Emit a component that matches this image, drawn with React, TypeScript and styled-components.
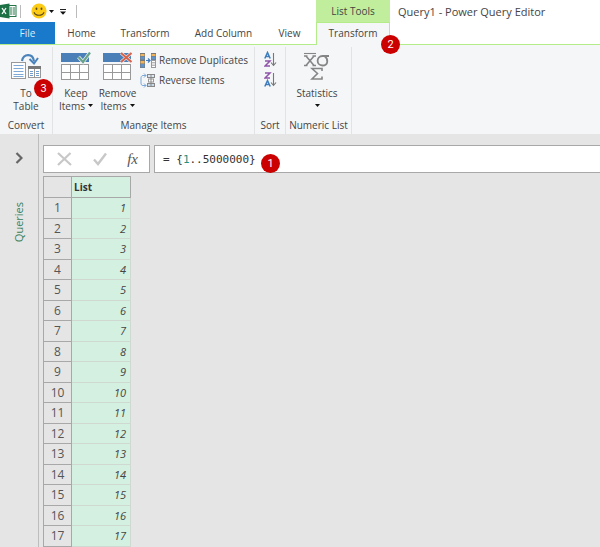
import React from "react";
import styled, { createGlobalStyle } from "styled-components";

const GlobalStyle = createGlobalStyle`
  * { box-sizing: border-box; }
  body { margin: 0; background: #e5e5e5; }
  body, button, input { font-family: "Open Sans", "Noto Sans", sans-serif; color: #444; }
  button { border: 0; padding: 0; margin: 0; background: transparent; cursor: pointer; }
  svg { display: block; flex: none; }
`;

const Window = styled.div`
  display: flex;
  flex-direction: column;
  min-height: 100vh;
`;

const Header = styled.header`
  display: flex;
  align-items: flex-end;
  height: 45px;
  background: linear-gradient(#fff 44px, #b4ec8a 44px);
`;

const HeaderLeft = styled.div`
  display: flex;
  flex-direction: column;
  width: 316px;
  height: 45px;
`;

const QuickBar = styled.div`
  display: flex;
  align-items: center;
  height: 22px;
`;

const QuickButton = styled.button`
  display: flex;
  align-items: center;
  gap: 2px;
  margin-right: 6px;
`;

const Divider = styled.span<{ $left: number; $right: number }>`
  width: 1px;
  height: 13px;
  margin: 0 ${(p) => p.$right}px 0 ${(p) => p.$left}px;
  background: #bbb;
`;

const Tabs = styled.nav`
  display: flex;
  height: 22px;
`;

const Tab = styled.button<{ $width: number; $file?: boolean }>`
  width: ${(p) => p.$width}px;
  height: 22px;
  font-size: 10px;
  line-height: 22px;
  white-space: nowrap;
  color: ${(p) => (p.$file ? "#dcecf8" : "#444")};
  background: ${(p) => (p.$file ? "#1979ca" : "transparent")};
`;

const ContextTabs = styled.div`
  position: relative;
  display: flex;
  flex-direction: column;
  width: 74px;
  height: 45px;
`;

const ContextTitle = styled.div`
  height: 22px;
  background: #c0ee9c;
  font-size: 10px;
  line-height: 22px;
  text-align: center;
`;

const ContextTab = styled.button`
  height: 23px;
  padding-bottom: 2px;
  border: 1px solid #b4ec8a;
  border-bottom: 0;
  background: #f4f6f8;
  font-size: 10px;
  line-height: 20px;
`;

const Title = styled.h1`
  align-self: flex-start;
  margin: 0 0 0 8px;
  font-size: 11px;
  font-weight: 400;
  line-height: 24px;
  white-space: nowrap;
`;

const Badge = styled.span<{ $left: number; $top: number }>`
  position: absolute;
  left: ${(p) => p.$left}px;
  top: ${(p) => p.$top}px;
  z-index: 1;
  width: 19px;
  height: 19px;
  border-radius: 50%;
  background: #cb0000;
  color: #fff;
  font: 11px/19px Roboto, sans-serif;
  text-align: center;
`;

const Ribbon = styled.section`
  display: flex;
  height: 89px;
  padding-top: 2px;
  background: #f4f6f8;
`;

const Group = styled.div<{ $width: number }>`
  position: relative;
  display: flex;
  flex-direction: column;
  width: ${(p) => p.$width}px;
  height: 87px;
  border-right: 1px solid #e1e3e5;
`;

const GroupBody = styled.div<{ $start?: boolean }>`
  display: flex;
  flex: 1;
  justify-content: ${(p) => (p.$start ? "flex-start" : "center")};
`;

const GroupLabel = styled.div`
  height: 18px;
  font-size: 10px;
  line-height: 18px;
  text-align: center;
  white-space: nowrap;
`;

const BigButton = styled.button<{ $width: number }>`
  display: flex;
  flex-direction: column;
  align-items: center;
  width: ${(p) => p.$width}px;
  padding-top: 5px;
  font-size: 10px;
  line-height: 14px;

  > svg { margin-bottom: 6px; }
`;

const ButtonLine = styled.span`
  display: flex;
  align-items: center;
  gap: 3px;
  height: 13px;
  white-space: nowrap;
`;

const SmallButtons = styled.div`
  display: flex;
  flex-direction: column;
  gap: 4px;
  padding: 5px 0 0 4px;
  flex: 1;
`;

const SmallButton = styled.button`
  display: flex;
  align-items: center;
  gap: 3px;
  height: 16px;
  font-size: 10px;
  white-space: nowrap;
`;

const SortButtons = styled.div`
  display: flex;
  flex-direction: column;
  gap: 3px;
  padding-top: 4px;
`;

const Body = styled.main`
  display: flex;
  flex: 1;
`;

const QueriesPane = styled.aside`
  display: flex;
  flex-direction: column;
  align-items: center;
  width: 39px;
  padding-top: 18px;
  border-right: 1px solid #bdbdbd;
`;

const PaneTitle = styled.span`
  margin-top: 38px;
  writing-mode: vertical-rl;
  transform: rotate(180deg);
  color: #388058;
  font-size: 11px;
  line-height: 18px;
`;

const Content = styled.div`
  flex: 1;
  min-width: 0;
  padding: 11px 0 0 4px;
`;

const FormulaRow = styled.div`
  display: flex;
  gap: 4px;
  height: 28px;
`;

const FormulaTools = styled.div`
  display: flex;
  align-items: center;
  justify-content: space-between;
  width: 107px;
  padding: 0 11px 0 13px;
  border: 1px solid #a8a8a8;
  background: #fff;
`;

const FxLabel = styled.span`
  font: italic 15px/20px "Liberation Serif", serif;
  color: #555;
`;

const Formula = styled.div`
  position: relative;
  flex: 1;
  padding-left: 8px;
  border: 1px solid #a8a8a8;
  border-right: 0;
  background: #fff;
  font: 11px/28px "DejaVu Sans Mono", monospace;
  color: #333;
  white-space: pre;
`;

const FormulaNumber = styled.span`
  color: #259180;
`;

const ListTable = styled.table`
  width: 88px;
  margin-top: 3px;
  table-layout: fixed;
  border-collapse: collapse;
`;

const CornerCell = styled.th`
  width: 28px;
  height: 21px;
  padding: 0;
  border: 1px solid #a8a8a8;
`;

const ColumnHead = styled.th`
  padding: 0 0 0 2px;
  border: 1px solid #a8a8a8;
  background: #d4f0e0;
  font-size: 10px;
  line-height: 14px;
  text-align: left;
  color: #333;
`;

const Row = styled.tr`
  height: 20px;
  &:nth-child(odd) { height: 21px; }
`;

const RowHead = styled.th`
  padding: 0;
  border: 1px solid #a8a8a8;
  font-size: 12px;
  font-weight: 400;
  line-height: 16px;
  color: #555;
`;

const Value = styled.td`
  padding: 0 4px 0 0;
  border: 1px solid #d0d8d2;
  border-left-color: #a8a8a8;
  background: #d4f0e0;
  font-size: 11px;
  font-style: italic;
  line-height: 16px;
  text-align: right;
`;

const Caret = () => (
  <svg width="5" height="3" viewBox="0 0 5 3"><path d="M0 0h5L2.5 3z" fill="#111" /></svg>
);

const ExcelIcon = () => (
  <svg width="17" height="16" viewBox="0 0 17 16">
    <rect x="8" y="2.5" width="8" height="11" fill="#fff" stroke="#247548" />
    <path d="M10 5h5M10 7h5M10 9h5M10 11h5" stroke="#247548" strokeWidth="1.1" />
    <path d="M12.5 4v8" stroke="#fff" strokeWidth=".6" />
    <path d="M0 2 9.500 .5v15L0 14z" fill="#1e7145" />
    <path d="m2 5 4 6M6 5l-4 6" stroke="#fff" strokeWidth="1.3" />
  </svg>
);

const SmileIcon = () => (
  <svg width="16" height="16" viewBox="0 0 16 16">
    <circle cx="8" cy="8" r="7.600" fill="#fbcb16" />
    <ellipse cx="5.500" cy="5.800" rx=".9" ry="1.300" fill="#5b4a1a" />
    <ellipse cx="10.500" cy="5.800" rx=".9" ry="1.300" fill="#5b4a1a" />
    <path d="M3 9.300c1.500 4 8.500 4 10 0" fill="none" stroke="#5b4a1a" strokeWidth="1.100" />
  </svg>
);

const MoreIcon = () => (
  <svg width="6" height="8" viewBox="0 0 6 8"><path d="M0 2.500h6" stroke="#222" /><path d="M0 4.500h6L3 7.800z" fill="#111" /></svg>
);

const ToTableIcon = () => (
  <svg width="31" height="28" viewBox="0 0 31 28">
    <path d="M11 9C12 1.500 22 .5 23 9.500" fill="none" stroke="#4a82bb" strokeWidth="2.200" />
    <path d="m18.500 7 4.500 4.500 4-5.500" fill="none" stroke="#4a82bb" strokeWidth="2" />
    <rect x=".5" y="10.500" width="14" height="16" fill="#fff" stroke="#999" />
    <path d="M2.500 13.500h10M2.500 16.500h10M2.500 19.500h10M2.500 22.500h10M2.500 24.500h10" stroke="#7ea9d4" />
    <rect x="17.500" y="14.500" width="12" height="11" fill="#fff" stroke="#999" />
    <path d="M17 15.500h13" stroke="#777" strokeWidth="3" />
    <path d="M23.500 17v8" stroke="#999" />
    <path d="M19 19.500h3M25 19.500h3M19 21.500h3M25 21.500h3M19 23.500h3M25 23.500h3" stroke="#6d9ccc" />
  </svg>
);

const GridIcon = ({ mark }: { mark: "check" | "cross" }) => (
  <svg width="30" height="28" viewBox="0 0 30 28">
    <path d="M0 1h28v9H0z" fill="#4a7fb8" />
    <rect x=".5" y="12.500" width="27" height="15" fill="#fff" stroke="#999" />
    <path d="M9.500 12v16M18.500 12v16M0 20.500h28" stroke="#999" />
    {mark === "check" ? (
      <>
        <path d="m17.500 5 4.500 5 7-9.500" fill="none" stroke="#f4f6f8" strokeWidth="3.600" />
        <path d="m17.500 5 4.500 5 7-9.500" fill="none" stroke="#68a28a" strokeWidth="2.200" />
      </>
    ) : (
      <>
        <path d="m18 1 10.500 9M28.500 1 18 10" stroke="#e6e7ec" strokeWidth="3.200" />
        <path d="m18 1 10.500 9M28.500 1 18 10" stroke="#d86149" strokeWidth="1.900" />
      </>
    )}
  </svg>
);

const DuplicatesIcon = () => (
  <svg width="16" height="15" viewBox="0 0 16 15">
    <rect width="5" height="15" fill="#777" />
    <path d="M.5 3.500h4v3h-4zM.5 11h4v3.500h-4z" fill="#5f93c9" />
    <path d="M.5 1h4v2h-4zM.5 8h4v2.500h-4z" fill="#efb45b" />
    <path d="M6 7.500h4M8 5.500l2 2-2 2" fill="none" stroke="#3f7dbd" strokeWidth="1.200" />
    <rect x="11" width="5" height="7" fill="#777" />
    <path d="M11.500 3.500h4v3h-4z" fill="#5f93c9" />
    <path d="M11.500 1h4v2h-4z" fill="#efb45b" />
    <rect x="11.500" y="7.500" width="4" height="7" fill="#fff" stroke="#999" />
    <path d="M11 9.800h5M11 12.200h5" stroke="#999" />
  </svg>
);

const ReverseIcon = () => (
  <svg width="16" height="15" viewBox="0 0 16 15">
    <path d="M6 2.500H3C1.500 2.500 1 4 1 5v5c0 1.500.5 2.500 2 2.500h3M4 .5l2 2-2 2M4 10.500l2 2-2 2" fill="none" stroke="#7ba6d6" />
    <rect x="7.500" y="1.500" width="7" height="3" fill="#dce7f3" stroke="#888" />
    <rect x="8.500" y="6" width="5" height="3" fill="#fff" stroke="#999" />
    <rect x="7.500" y="10.500" width="7" height="3" fill="#c6d7e9" stroke="#888" />
    <path d="M11 1v13" stroke="#888" />
  </svg>
);

const A_SHAPE = "m.8 6.500 2.700-6 2.700 6M1.800 4.500h3.400";
const Z_SHAPE = "M1 1h5L1 6h5";

const SortIcon = ({ reverse = false }: { reverse?: boolean }) => (
  <svg width="13" height="17" viewBox="0 0 13 17">
    <g fill="none" strokeWidth="1.500">
      <path d={A_SHAPE} stroke="#3f7dbd" transform={reverse ? "translate(0 9)" : "translate(0 1)"} />
      <path d={Z_SHAPE} stroke="#8e55a8" transform={reverse ? "translate(0 1)" : "translate(0 9)"} />
    </g>
    <path d="M9.500 2v12M7 11.500l2.500 3 2.500-3" fill="none" stroke="#777" strokeWidth="1.100" />
  </svg>
);

const StatisticsIcon = () => (
  <svg width="26" height="28" viewBox="0 0 26 28" fill="none" stroke="#858585" strokeWidth="1.600">
    <path d="M0 1.500h12" strokeWidth="1.100" />
    <path d="m2 4 8 9.500M10 4l-8 9.500M0 13.500h3.500M8.500 13.500H12M0 4h3.500M8.500 4H12" />
    <path d="M25 4h-6.500c-6.500 0-6.500 9.500 0 9.500 6 0 6-6.500 2-9.500" strokeWidth="1.800" />
    <path d="M18 19v-2.500H8l5.500 5L8 27h10v-2.500" />
  </svg>
);

const CancelIcon = () => (
  <svg width="15" height="14" viewBox="0 0 15 14"><path d="m1 1 13 12M13.500 1 1 13" stroke="#c8c8c8" strokeWidth="2.200" /></svg>
);

const AcceptIcon = () => (
  <svg width="14" height="14" viewBox="0 0 14 14"><path d="m1 7.500 4 4.500 8-10.500" fill="none" stroke="#c8c8c8" strokeWidth="2.400" /></svg>
);

const ExpandIcon = () => (
  <svg width="8" height="12" viewBox="0 0 8 12"><path d="m1.500 1 5 5-5 5" fill="none" stroke="#666" strokeWidth="2.200" /></svg>
);

const values = Array.from({ length: 17 }, (_, i) => i + 1);

export default function App() {
  return (
    <Window>
      <GlobalStyle />
      <Header>
        <HeaderLeft>
          <QuickBar>
            <ExcelIcon />
            <Divider $left={3} $right={10} />
            <QuickButton aria-label="Send feedback"><SmileIcon /><Caret /></QuickButton>
            <QuickButton aria-label="Customize toolbar"><MoreIcon /></QuickButton>
            <Divider $left={4} $right={0} />
          </QuickBar>
          <Tabs>
            <Tab $width={55} $file>File</Tab>
            <Tab $width={53}>Home</Tab>
            <Tab $width={74}>Transform</Tab>
            <Tab $width={83}>Add Column</Tab>
            <Tab $width={49}>View</Tab>
          </Tabs>
        </HeaderLeft>
        <ContextTabs>
          <ContextTitle>List Tools</ContextTitle>
          <ContextTab>Transform</ContextTab>
          <Badge $left={65} $top={35}>2</Badge>
        </ContextTabs>
        <Title>Query1 - Power Query Editor</Title>
      </Header>

      <Ribbon>
        <Group $width={53}>
          <GroupBody>
            <BigButton $width={50}>
              <ToTableIcon />
              <ButtonLine>To</ButtonLine>
              <ButtonLine>Table</ButtonLine>
            </BigButton>
          </GroupBody>
          <GroupLabel>Convert</GroupLabel>
          <Badge $left={34} $top={32}>3</Badge>
        </Group>
        <Group $width={202}>
          <GroupBody>
            <BigButton $width={46}>
              <GridIcon mark="check" />
              <ButtonLine>Keep</ButtonLine>
              <ButtonLine>Items <Caret /></ButtonLine>
            </BigButton>
            <BigButton $width={37}>
              <GridIcon mark="cross" />
              <ButtonLine>Remove</ButtonLine>
              <ButtonLine>Items <Caret /></ButtonLine>
            </BigButton>
            <SmallButtons>
              <SmallButton><DuplicatesIcon />Remove Duplicates</SmallButton>
              <SmallButton><ReverseIcon />Reverse Items</SmallButton>
            </SmallButtons>
          </GroupBody>
          <GroupLabel>Manage Items</GroupLabel>
        </Group>
        <Group $width={31}>
          <GroupBody>
            <SortButtons>
              <button aria-label="Sort ascending"><SortIcon /></button>
              <button aria-label="Sort descending"><SortIcon reverse /></button>
            </SortButtons>
          </GroupBody>
          <GroupLabel>Sort</GroupLabel>
        </Group>
        <Group $width={66}>
          <GroupBody $start>
            <BigButton $width={62}>
              <StatisticsIcon />
              <ButtonLine>Statistics</ButtonLine>
              <ButtonLine><Caret /></ButtonLine>
            </BigButton>
          </GroupBody>
          <GroupLabel>Numeric List</GroupLabel>
        </Group>
      </Ribbon>

      <Body>
        <QueriesPane>
          <button aria-label="Expand queries"><ExpandIcon /></button>
          <PaneTitle>Queries</PaneTitle>
        </QueriesPane>
        <Content>
          <FormulaRow>
            <FormulaTools>
              <button aria-label="Cancel"><CancelIcon /></button>
              <button aria-label="Accept"><AcceptIcon /></button>
              <FxLabel>fx</FxLabel>
            </FormulaTools>
            <Formula>
              {"= {"}<FormulaNumber>1</FormulaNumber>{"..5000000}"}
              <Badge $left={106} $top={8}>1</Badge>
            </Formula>
          </FormulaRow>
          <ListTable>
            <thead>
              <tr>
                <CornerCell aria-label="Row" />
                <ColumnHead>List</ColumnHead>
              </tr>
            </thead>
            <tbody>
              {values.map((n) => (
                <Row key={n}>
                  <RowHead scope="row">{n}</RowHead>
                  <Value>{n}</Value>
                </Row>
              ))}
            </tbody>
          </ListTable>
        </Content>
      </Body>
    </Window>
  );
}
